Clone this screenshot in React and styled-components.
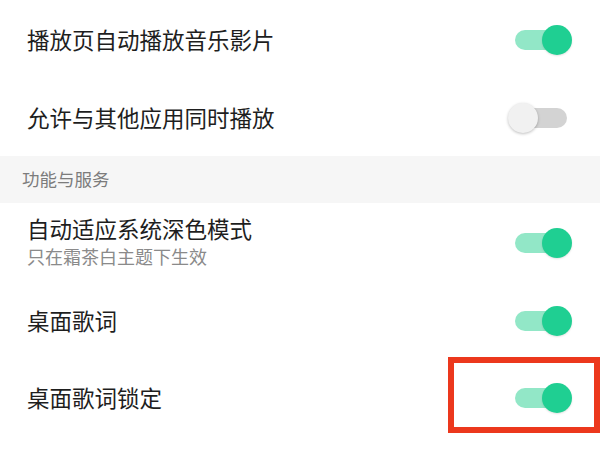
import React, { useState } from 'react';
import styled, { createGlobalStyle } from 'styled-components';

const GlobalStyle = createGlobalStyle`
    html, body {
        margin: 0;
        padding: 0;
        background: #ffffff;
    }
    body {
        font-family: "Noto Sans CJK SC", "Noto Sans", sans-serif;
        -webkit-font-smoothing: antialiased;
    }
`;

const Page = styled.div`
    position: relative;
    width: 600px;
    height: 450px;
    overflow: hidden;
    background: #fff;
`;

const Row = styled.div`
    display: flex;
    align-items: center;
    justify-content: space-between;
    height: ${props => props.h}px;
    padding: 0 33px 0 27px;
    box-sizing: border-box;
`;

const Texts = styled.div`
    display: flex;
    flex-direction: column;
    padding-bottom: 4px;
`;

const Title = styled.div`
    font-size: 22.5px;
    line-height: 30px;
    color: #1e1e1e;
    padding-bottom: ${props => (props.single ? 3 : 0)}px;
`;

const Sub = styled.div`
    font-size: 18px;
    line-height: 26px;
    color: #8a8a8a;
`;

const SectionHead = styled.div`
    height: 47px;
    display: flex;
    align-items: center;
    padding-left: 22px;
    padding-bottom: 2px;
    box-sizing: border-box;
    background: #f6f6f6;
    font-size: 17.5px;
    color: #7c7c7c;
`;

const Track = styled.button`
    position: relative;
    width: 52px;
    height: 20px;
    border: none;
    padding: 0;
    border-radius: 10px;
    background: ${props => (props.on ? '#92e7c7' : '#d3d3d3')};
    cursor: pointer;
    flex-shrink: 0;
    span {
        position: absolute;
        top: -5px;
        left: ${props => (props.on ? '27px' : '-7px')};
        width: 30px;
        height: 30px;
        border-radius: 50%;
        background: ${props => (props.on ? '#1fcf92' : '#f1f1f1')};
        box-shadow: ${props => (props.on
            ? '0 1px 2px rgba(0,0,0,0.12)'
            : '0 1px 3px rgba(0,0,0,0.25)')};
    }
`;

const Mark = styled.div`
    position: absolute;
    left: 448px;
    top: 357px;
    width: 152px;
    height: 76px;
    box-sizing: border-box;
    border: 6px solid #ec381d;
    pointer-events: none;
`;

const Switch = ({ value }) => {
    const [on, setOn] = useState(value);
    return (
        <Track on={on ? 1 : 0} onClick={() => setOn(!on)}>
            <span />
        </Track>
    );
};

const App = () => {
    return (
        <Page>
            <GlobalStyle />
            <Row h={80}>
                <Title single>播放页自动播放音乐影片</Title>
                <Switch value={true} />
            </Row>
            <Row h={76}>
                <Title single>允许与其他应用同时播放</Title>
                <Switch value={false} />
            </Row>
            <SectionHead>功能与服务</SectionHead>
            <Row h={80}>
                <Texts>
                    <Title>自动适应系统深色模式</Title>
                    <Sub>只在霜茶白主题下生效</Sub>
                </Texts>
                <Switch value={true} />
            </Row>
            <Row h={76}>
                <Title single>桌面歌词</Title>
                <Switch value={true} />
            </Row>
            <Row h={78}>
                <Title single>桌面歌词锁定</Title>
                <Switch value={true} />
            </Row>
            <Mark />
        </Page>
    );
};

export default App;
